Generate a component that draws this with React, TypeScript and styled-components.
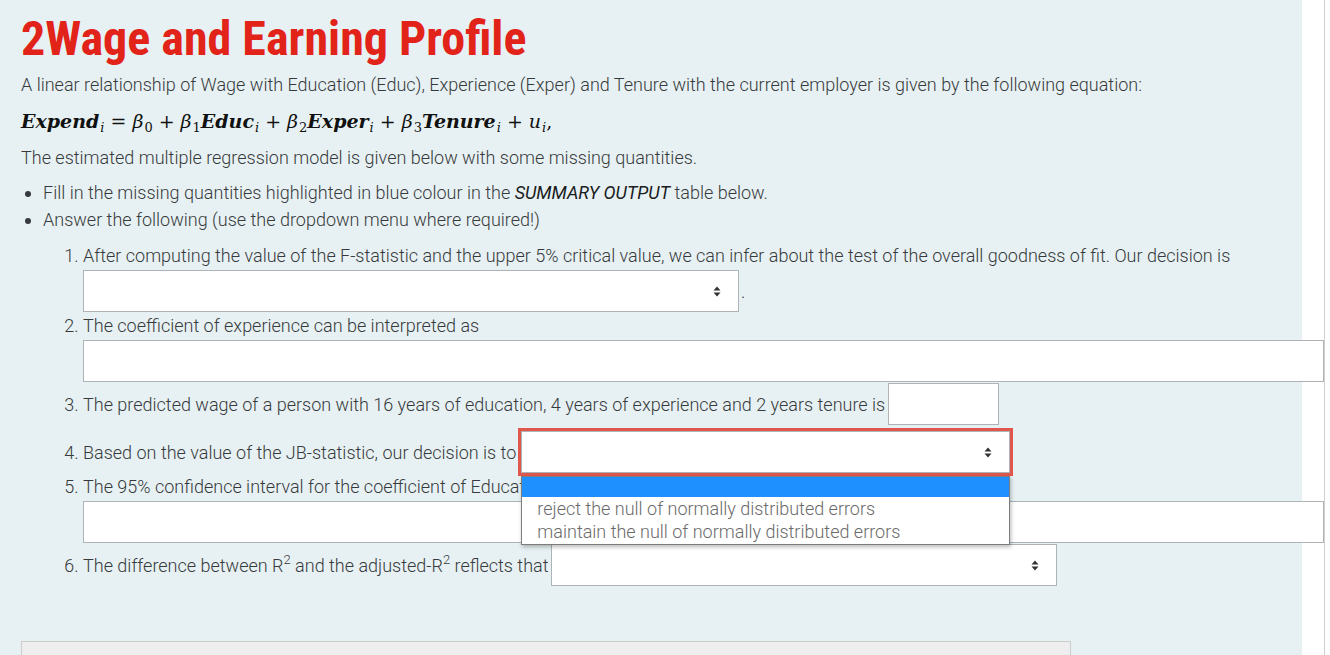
import React from "react";
import styled, { createGlobalStyle } from "styled-components";

const Global = createGlobalStyle`
  html, body { margin: 0; padding: 0; background: #ffffff; }
  body {
    font-family: Roboto, "Liberation Sans", Arial, sans-serif;
    font-weight: 300;
    font-size: 18px;
    line-height: 27px;
    color: #373a3c;
  }
`;

const Page = styled.div`
  display: flex;
  width: 1330px;
  min-height: 655px;
  overflow: hidden;
`;

const Panel = styled.main`
  position: relative;
  z-index: 1;
  flex: none;
  width: 1302px;
  box-sizing: border-box;
  padding: 0 0 0 21px;
  background: #e7f1f3;
`;

const Gutter = styled.div`
  flex: none;
  width: 22px;
  background: #ffffff;
  border-right: 1px solid #d0d0d0;
`;

const Title = styled.h2`
  margin: 10px 0 0;
  font-family: "Roboto Condensed", Roboto, "Liberation Sans", sans-serif;
  font-stretch: condensed;
  font-weight: 700;
  font-size: 48px;
  line-height: 57px;
  color: #e2231a;
`;

const Para = styled.p<{ $mt: number }>`
  margin: ${(p) => p.$mt}px 0 0;
`;

const MathLine = styled.div`
  margin: 10px 0 0;
  font-family: "DejaVu Serif", "Liberation Serif", serif;
  font-size: 19px;
  color: #111;
  font-weight: 400;
`;

const V = styled.i`
  font-weight: 700;
  font-style: italic;
`;

const G = styled.i`
  font-style: italic;
  font-weight: 400;
`;

const Sub = styled.sub`
  font-size: 13px;
  font-style: italic;
  font-weight: 400;
  vertical-align: -4px;
  line-height: 0;
  margin-left: 1px;
`;

const NumSub = styled(Sub)`
  font-style: normal;
`;

const Op = styled.span`
  margin: 0 6px;
  font-weight: 400;
`;

const Bullets = styled.ul`
  margin: 8px 0 0;
  padding-left: 22px;
  list-style: disc;
`;

const BulletItem = styled.li``;

const Strong = styled.em`
  font-style: italic;
  font-weight: 400;
  color: #1a1c1d;
`;

const Questions = styled.ol`
  margin: 9px 0 0;
  padding-left: 40px;
`;

const Question = styled.li<{ $mt: number }>`
  margin-top: ${(p) => p.$mt}px;
`;

const Line = styled.div``;

const Row = styled.div<{ $mt?: number }>`
  display: flex;
  align-items: center;
  margin-top: ${(p) => p.$mt ?? 0}px;
  white-space: nowrap;
`;

const Label = styled.span`
  flex: none;
`;

const Field = styled.div<{ $w: number; $ml?: number; $mt?: number }>`
  flex: none;
  box-sizing: border-box;
  width: ${(p) => p.$w}px;
  height: 42px;
  margin-left: ${(p) => p.$ml ?? 0}px;
  margin-top: ${(p) => p.$mt ?? 0}px;
  background: #ffffff;
  border: 1px solid #adb3b7;
`;

const SelectBox = styled(Field)`
  display: flex;
  align-items: center;
  justify-content: flex-end;
  padding-right: 17px;
`;

const Focused = styled.div`
  position: relative;
  flex: none;
  margin-left: 5px;
  outline: 3px solid #e2574c;
  box-shadow: inset 0 0 4px rgba(226, 87, 76, 0.35);
`;

const Popup = styled.div`
  position: absolute;
  left: 0;
  right: 0;
  top: calc(100% + 3px);
  z-index: 5;
  box-sizing: border-box;
  background: #ffffff;
  border: 1px solid #7d7d7d;
  box-shadow: 1px 2px 4px rgba(0, 0, 0, 0.28);
  padding-bottom: 1px;
`;

const Option = styled.div<{ $active?: boolean }>`
  height: ${(p) => (p.$active ? 20 : 23)}px;
  line-height: 23px;
  padding-left: 15px;
  background: ${(p) => (p.$active ? "#1e90ff" : "#ffffff")};
  color: #6a6a6a;
  white-space: nowrap;
`;

const Period = styled.span`
  margin-left: 2px;
`;

const Sup = styled.sup`
  font-size: 13px;
  line-height: 0;
  vertical-align: 8px;
`;

const Footer = styled.div`
  margin: 55px 0 0;
  width: 1050px;
  height: 80px;
  box-sizing: border-box;
  background: #eeeeee;
  border: 1px solid #cccccc;
`;

const Arrows = () => (
  <svg width="8" height="11" viewBox="0 0 8 11" aria-hidden="true">
    <path d="M4 0.5 L7.5 4.5 H0.5 Z M0.5 6.5 H7.5 L4 10.5 Z" fill="#333" />
  </svg>
);

const Select = ({ w, ml, mt }: { w: number; ml?: number; mt?: number }) => (
  <SelectBox $w={w} $ml={ml} $mt={mt}>
    <Arrows />
  </SelectBox>
);

export default function App() {
  return (
    <>
      <Global />
      <Page>
        <Panel>
          <Title>2Wage and Earning Profile</Title>
          <Para $mt={4}>
            A linear relationship of Wage with Education (Educ), Experience (Exper) and Tenure with the current
            employer is given by the following equation:
          </Para>
          <MathLine>
            <V>Expend</V>
            <Sub>i</Sub>
            <Op>=</Op>
            <G>β</G>
            <NumSub>0</NumSub>
            <Op>+</Op>
            <G>β</G>
            <NumSub>1</NumSub>
            <V>Educ</V>
            <Sub>i</Sub>
            <Op>+</Op>
            <G>β</G>
            <NumSub>2</NumSub>
            <V>Exper</V>
            <Sub>i</Sub>
            <Op>+</Op>
            <G>β</G>
            <NumSub>3</NumSub>
            <V>Tenure</V>
            <Sub>i</Sub>
            <Op>+</Op>
            <G>u</G>
            <Sub>i</Sub>,
          </MathLine>
          <Para $mt={9}>The estimated multiple regression model is given below with some missing quantities.</Para>
          <Bullets>
            <BulletItem>
              Fill in the missing quantities highlighted in blue colour in the <Strong>SUMMARY OUTPUT</Strong> table
              below.
            </BulletItem>
            <BulletItem>
              Answer the following (use the dropdown menu where required!)
              <Questions>
                <Question $mt={0}>
                  <Line>
                    After computing the value of the F-statistic and the upper 5% critical value, we can infer about
                    the test of the overall goodness of fit. Our decision is
                  </Line>
                  <Row $mt={1}>
                    <Select w={656} />
                    <Period>.</Period>
                  </Row>
                </Question>
                <Question $mt={0}>
                  <Line>The coefficient of experience can be interpreted as</Line>
                  <Field $w={1241} $mt={1} />
                </Question>
                <Question $mt={1}>
                  <Row>
                    <Label>
                      The predicted wage of a person with 16 years of education, 4 years of experience and 2 years
                      tenure is
                    </Label>
                    <Field $w={111} $ml={3} />
                  </Row>
                </Question>
                <Question $mt={6}>
                  <Row>
                    <Label>Based on the value of the JB-statistic, our decision is to</Label>
                    <Focused>
                      <Select w={489} />
                      <Popup>
                        <Option $active />
                        <Option>reject the null of normally distributed errors</Option>
                        <Option>maintain the null of normally distributed errors</Option>
                      </Popup>
                    </Focused>
                  </Row>
                </Question>
                <Question $mt={0}>
                  <Line>The 95% confidence interval for the coefficient of Education is</Line>
                  <Field $w={1241} $mt={1} />
                </Question>
                <Question $mt={1}>
                  <Row>
                    <Label>
                      The difference between R<Sup>2</Sup> and the adjusted-R<Sup>2</Sup> reflects that
                    </Label>
                    <Select w={506} ml={2} />
                  </Row>
                </Question>
              </Questions>
            </BulletItem>
          </Bullets>
          <Footer />
        </Panel>
        <Gutter />
      </Page>
    </>
  );
}
